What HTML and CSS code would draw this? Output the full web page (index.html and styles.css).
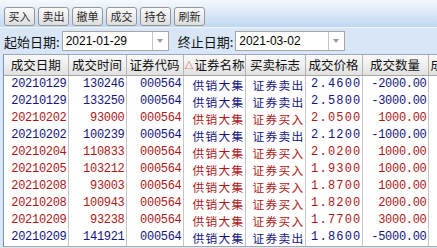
FILE: index.html
```html
<!DOCTYPE html>
<html lang="zh-CN">

<head>
    <meta charset="utf-8">
    <title>成交查询</title>
    <link rel="stylesheet" href="styles.css">
</head>

<body>
    <!-- 工具栏 -->
    <div class="toolbar">
        <button class="btn">买入</button>
        <button class="btn">卖出</button>
        <button class="btn">撤单</button>
        <button class="btn">成交</button>
        <button class="btn">持仓</button>
        <button class="btn">刷新</button>
    </div>
    <!-- 日期条件 -->
    <div class="filter">
        <span class="label">起始日期:</span>
        <div class="datebox"><span class="val">2021-01-29</span><span class="drop"></span></div>
        <span class="label second">终止日期:</span>
        <div class="datebox wide"><span class="val">2021-03-02</span><span class="drop"></span></div>
    </div>
    <!-- 成交列表 -->
    <div class="grid">
        <table>
            <colgroup>
                <col class="c1"><col class="c2"><col class="c3"><col class="c4">
                <col class="c5"><col class="c6"><col class="c7"><col class="c8">
            </colgroup>
            <thead>
                <tr>
                    <th>成交日期</th>
                    <th>成交时间</th>
                    <th>证券代码</th>
                    <th class="sorted"><span class="tri">△</span>证券名称</th>
                    <th>买卖标志</th>
                    <th>成交价格</th>
                    <th>成交数量</th>
                    <th class="cut">成交金额</th>
                </tr>
            </thead>
            <tbody>
                <tr class="sell"><td>20210129</td><td>130246</td><td>000564</td><td class="cn">供销大集</td><td class="cn">证券卖出</td><td class="price">2.4600</td><td>-2000.00</td><td></td></tr>
                <tr class="sell"><td>20210129</td><td>133250</td><td>000564</td><td class="cn">供销大集</td><td class="cn">证券卖出</td><td class="price">2.5800</td><td>-3000.00</td><td></td></tr>
                <tr class="buy"><td>20210202</td><td>93000</td><td>000564</td><td class="cn">供销大集</td><td class="cn">证券买入</td><td class="price">2.0500</td><td>1000.00</td><td></td></tr>
                <tr class="sell"><td>20210202</td><td>100239</td><td>000564</td><td class="cn">供销大集</td><td class="cn">证券卖出</td><td class="price">2.1200</td><td>-1000.00</td><td></td></tr>
                <tr class="buy"><td>20210204</td><td>110833</td><td>000564</td><td class="cn">供销大集</td><td class="cn">证券买入</td><td class="price">2.0200</td><td>1000.00</td><td></td></tr>
                <tr class="buy"><td>20210205</td><td>103212</td><td>000564</td><td class="cn">供销大集</td><td class="cn">证券买入</td><td class="price">1.9300</td><td>1000.00</td><td></td></tr>
                <tr class="buy"><td>20210208</td><td>93003</td><td>000564</td><td class="cn">供销大集</td><td class="cn">证券买入</td><td class="price">1.8700</td><td>1000.00</td><td></td></tr>
                <tr class="buy"><td>20210208</td><td>100943</td><td>000564</td><td class="cn">供销大集</td><td class="cn">证券买入</td><td class="price">1.8200</td><td>2000.00</td><td></td></tr>
                <tr class="buy"><td>20210209</td><td>93238</td><td>000564</td><td class="cn">供销大集</td><td class="cn">证券买入</td><td class="price">1.7700</td><td>3000.00</td><td></td></tr>
                <tr class="sell"><td>20210209</td><td>141921</td><td>000564</td><td class="cn">供销大集</td><td class="cn">证券卖出</td><td class="price">1.8600</td><td>-5000.00</td><td></td></tr>
            </tbody>
        </table>
    </div>
</body>

</html>
```

FILE: styles.css
```css
/* reset */

body,
div,
table,
th,
td {
    margin: 0;
    padding: 0;
}

body {
    background: #d8e6f7;
    font: 13px/1 "Noto Sans CJK SC", sans-serif;
    overflow: hidden;
}
/* 工具栏 */

.toolbar {
    display: flex;
    gap: 3px;
    height: 28px;
    padding: 7px 0 0 4px;
    box-sizing: border-box;
    background: linear-gradient(#f5f9fd, #e0ebf9 40%, #bfd7f2);
    border-bottom: 1px solid #eef4fc;
}

.btn {
    width: 31px;
    height: 19px;
    padding: 0;
    border: 1px solid #979797;
    border-radius: 3px;
    background: linear-gradient(#fbfbfb, #dedede);
    font: 11px/17px "Noto Sans CJK SC", sans-serif;
    color: #2a2a2a;
}
/* 日期条件 */

.filter {
    display: flex;
    align-items: center;
    height: 26px;
    padding-left: 4px;
}

.label {
    font-size: 13px;
    color: #111;
    margin-right: 2px;
}

.label.second {
    margin-left: 9px;
}

.datebox {
    display: flex;
    width: 107px;
    height: 20px;
    box-sizing: border-box;
    border: 1px solid #a6a6a6;
    background: #fff;
}

.datebox.wide {
    width: 110px;
}

.datebox .val {
    flex: 1;
    padding-left: 3px;
    font: 12px/18px "Liberation Sans", sans-serif;
    color: #000;
}

.datebox .drop {
    position: relative;
    width: 15px;
    border-left: 1px solid #c4c4c4;
}
/* 下拉小三角 */

.datebox .drop::after {
    content: "";
    position: absolute;
    left: 4px;
    top: 7px;
    border: 3px solid transparent;
    border-top: 4px solid #9c9c9c;
}
/* 列表 */

.grid {
    margin-left: 3px;
    border-left: 1px solid #6f93c2;
    border-top: 1px solid #9aa8b8;
    overflow: hidden;
    background: #fff;
}

table {
    table-layout: fixed;
    border-collapse: collapse;
    width: 490px;
}

.c1 { width: 64px; }
.c2 { width: 58px; }
.c3 { width: 57px; }
.c4 { width: 62px; }
.c5 { width: 60px; }
.c6 { width: 57px; }
.c7 { width: 66px; }
.c8 { width: 66px; }

th {
    height: 20px;
    font-weight: normal;
    font-size: 12.5px;
    color: #111;
    text-align: center;
    white-space: nowrap;
    overflow: hidden;
    background: linear-gradient(#fafafa, #ececec 60%, #e0e0e0);
    border-right: 1px solid #b4b4b4;
    border-bottom: 1px solid #a8a8a8;
}

th.sorted {
    text-align: left;
    padding-left: 1px;
}

th.cut {
    text-align: left;
    padding-left: 2px;
}

.tri {
    color: #d02020;
    font-size: 9px;
    margin-right: 1px;
    vertical-align: 1px;
}

td {
    height: 17px;
    padding: 0 1px 0 0;
    text-align: right;
    white-space: nowrap;
    font: 12px/17px "Liberation Mono", monospace;
    letter-spacing: -0.3px;
    border-right: 1px solid #c6c6c6;
}

/* 中文格 字号小一点免得上下挤 */
td.cn {
    font: 11.7px/17px "Noto Sans CJK SC", sans-serif;
    letter-spacing: 1.3px;
    padding-right: 0;
}

td.price {
    letter-spacing: 1.2px;
    padding-right: 0;
}

tbody tr:last-child td {
    border-bottom: 1px solid #a8a8a8;
}

.sell td {
    color: #14147c;
}

.buy td {
    color: #ad1818;
}
```
